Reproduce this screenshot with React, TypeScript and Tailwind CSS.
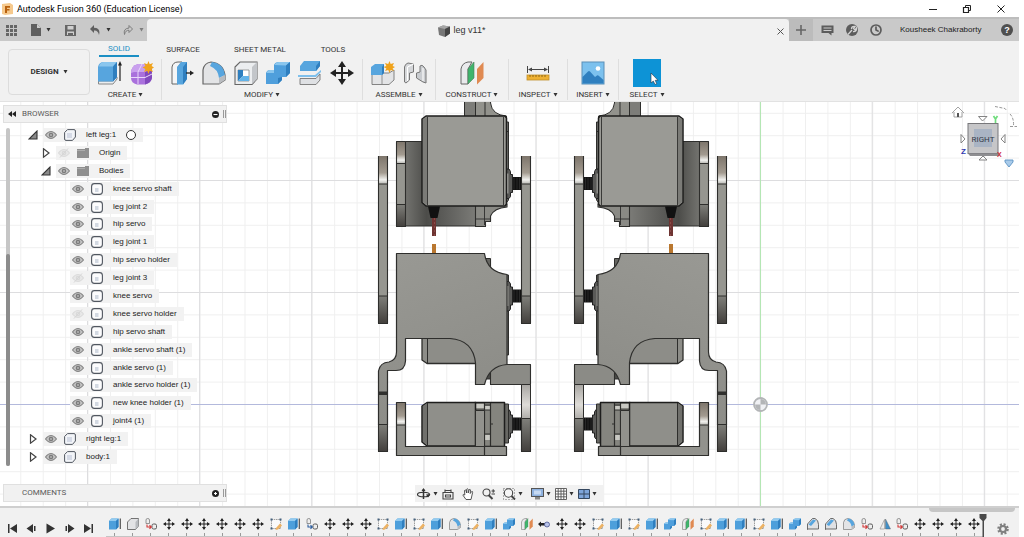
import React from "react";
import { Clock } from "lucide-react";

type IconProps = { className?: string };

/* ---------- Tool icons ---------- */

const Extrude = ({ className = "size-6" }: IconProps) => (
  <svg viewBox="0 0 24 24" className={className} aria-hidden="true">
    <path d="M0.500 20 H15 L19 16 V18 L15 23 H0.500 Z" fill="#eceef0" stroke="#888" strokeWidth="1" />
    <path d="M0 6 Q1 1 6 1 H19 V16 L15 20.500 H0 Z" fill="#57a5de" />
    <path d="M1 5.500 Q2 1 6 1 H19 L15 5.500 Z" fill="#8ac6ee" />
    <path d="M15 5.500 L19 1 V16 L15 20.500 Z" fill="#2f7fbf" />
    <path d="M22 3 V20" stroke="#222" strokeWidth="1.200" />
    <path d="M22 0 L24 4.500 H20 Z" fill="#222" />
  </svg>
);

const ExtrudeMini = ({ className = "size-3" }: IconProps) => (
  <svg viewBox="0 0 24 24" className={className} aria-hidden="true">
    <path d="M0 6 L5 1 H19 V18 L14 23 H0 Z" fill="#4d9fdb" />
    <path d="M0 6 L5 1 H19 L14 6 Z" fill="#93cbf0" />
    <path d="M14 6 L19 1 V18 L14 23 Z" fill="#2f7fbf" />
    <path d="M22.500 1 V22" stroke="#333" strokeWidth="2" />
  </svg>
);

const Form = ({ className = "size-6" }: IconProps) => (
  <svg viewBox="0 0 24 24" className={className} aria-hidden="true">
    <path d="M1 12 Q1 5 8 3 H16 Q20 4 22 8 V17 Q21 22 15 23.500 H7 Q1 22 1 17 Z" fill="#a970dc" />
    <path d="M1 12 Q1 5 8 3 H16 Q20 4 22 8 L15 11 H4 Z" fill="#c9a0ee" />
    <path d="M15 11 L22 8 V17 Q21 22 15 23.500 Z" fill="#8249bd" />
    <path d="M8 11 V23 M1 16.500 H15 L22 13 M12 3 L8 11" stroke="#e9d6fa" strokeWidth="1" fill="none" />
    <path d="M18.500 0 L19.700 3.300 L23 2 L21.600 5 L24 6.500 L21.600 8 L23 11 L19.700 9.800 L18.500 13 L17.200 9.800 L14 11 L15.400 8 L12.500 6.500 L15.400 5 L14 2 L17.200 3.300 Z" fill="#f0a31c" />
  </svg>
);

const PressPull = ({ className = "size-6" }: IconProps) => (
  <svg viewBox="0 0 24 24" className={className} aria-hidden="true">
    <path d="M2 6 Q3 1 8 1 H12 L8 6 V23 H2 Z" fill="#f4f5f6" stroke="#666" strokeWidth="1" />
    <path d="M7 6 L11 1 H17 V18 L13 23.500 H7 Z" fill="#57a5de" />
    <path d="M13 6 L17 1 V18 L13 23.500 Z" fill="#2f7fbf" />
    <path d="M16 12 H21" stroke="#222" strokeWidth="1.300" />
    <path d="M24 12 L20 9.600 V14.400 Z" fill="#222" />
  </svg>
);

const Fillet = ({ className = "size-6" }: IconProps) => (
  <svg viewBox="0 0 24 24" className={className} aria-hidden="true">
    <path d="M1 23 V9 Q2 2 9 1 Q21 2 23 14 V19 L17 23 Z" fill="#e3e4e6" stroke="#666" strokeWidth="1.200" />
    <path d="M10 1 Q21 2 23 14 L17 17 Q16 8 8 5 Z" fill="#57a5de" />
    <path d="M17 17 L23 14 V19 L17 23 Z" fill="#b9bcc0" />
  </svg>
);

const Chamfer = ({ className = "size-6" }: IconProps) => (
  <svg viewBox="0 0 24 24" className={className} aria-hidden="true">
    <path d="M1 23 V12 L11 1 H16 Q23 4 23 13 V22 H1 Z" fill="#dfe1e4" stroke="#555" strokeWidth="1.700" />
    <path d="M3 13 L12 3 L18 5 L8 16 Z" fill="#57a5de" />
  </svg>
);

const Shell = ({ className = "size-6" }: IconProps) => (
  <svg viewBox="0 0 24 24" className={className} aria-hidden="true">
    <path d="M1 6 L6 1 H23 V18 L18 23.500 H1 Z" fill="#eceef0" stroke="#666" strokeWidth="1.100" />
    <path d="M18 6 L23 1 V18 L18 23 Z" fill="#c3c6ca" />
    <path d="M4 9 H15 V20 H4 Z" fill="#fff" stroke="#888" strokeWidth="0.800" />
    <path d="M4 9 L9 9 V15 L4 20 Z" fill="#2f7fbf" />
    <path d="M9 15 H15 V20 H4 Z" fill="#63b3e8" />
  </svg>
);

const Combine = ({ className = "size-6" }: IconProps) => (
  <svg viewBox="0 0 24 24" className={className} aria-hidden="true">
    <path d="M0 12 Q1 9 4 9 H8 V4 Q9 1 13 1 H24 V12 L20 16 H16 V19 L12 23 H0 Z" fill="#4f9fdc" />
    <path d="M8.500 4 Q10 1 13 1 H24 L20 4.500 Z M0.500 12 Q1.500 9 4 9 H8 V12 Z" fill="#8ac6ee" />
    <path d="M20 4.500 L24 1 V12 L20 16 Z M12 17 L16 16 V19 L12 23 Z" fill="#2f7fbf" />
  </svg>
);

const OffsetFace = ({ className = "size-6" }: IconProps) => (
  <svg viewBox="0 0 24 24" className={className} aria-hidden="true">
    <path d="M2 5 L6 0 H22 V5 L18 10 H2 Z" fill="#57a5de" />
    <path d="M18 5 L22 0 V5 L18 10 Z" fill="#2f7fbf" />
    <path d="M0 14 H17 L23 9 V11 L18 16 H0 Z" fill="#7fc0ec" />
    <path d="M2 17.500 H18 L22 13 V19 L18 23.500 H2 Z" fill="#dfe1e4" stroke="#777" strokeWidth="0.900" />
  </svg>
);

const Move = ({ className = "size-6" }: IconProps) => (
  <svg viewBox="0 0 24 24" className={className} aria-hidden="true">
    <path d="M12 3 V21 M3 12 H21" stroke="#222" strokeWidth="2" />
    <path d="M12 0 L16 6 H8 Z M12 24 L16 18 H8 Z M0 12 L6 8 V16 Z M24 12 L18 8 V16 Z" fill="#222" />
  </svg>
);

const NewComponent = ({ className = "size-6" }: IconProps) => (
  <svg viewBox="0 0 24 24" className={className} aria-hidden="true">
    <path d="M1 12 H18 L23 9 V19 L18 23.500 H1 Z" fill="#e3e4e6" stroke="#777" strokeWidth="0.900" />
    <path d="M11 12 V23" stroke="#888" strokeWidth="0.900" />
    <path d="M0 6 L4 3 H13 V12 L11 14 H0 Z" fill="#57a5de" />
    <path d="M11 6 L13 3 V12 L11 14 Z" fill="#2f7fbf" />
    <path d="M18.500 0 L19.700 3 L23 2 L21.600 5 L24 6 L21.600 7.500 L23 10 L19.700 9 L18.500 12 L17.200 9 L14 10 L15.400 7.500 L12.500 6 L15.400 5 L14 2 L17.200 3 Z" fill="#f0a31c" />
  </svg>
);

const Joint = ({ className = "size-6" }: IconProps) => (
  <svg viewBox="0 0 24 24" className={className} aria-hidden="true">
    <path d="M1.500 6 Q2 3 5 2 L10.500 3 V11 L6.500 12 V19 L3 22 L1.500 21 Z" fill="#d4d6d9" stroke="#777" strokeWidth="1" />
    <path d="M4.500 6 L10.500 3 M4.500 6 V20" stroke="#fff" strokeWidth="1.200" fill="none" />
    <path d="M17 5 Q19 3 21 6 L23 9 V22 L20 21 L13.500 17 V12 L17 11 Z" fill="#c9ccd0" stroke="#777" strokeWidth="1" />
    <path d="M20 7 V20" stroke="#f6f6f6" strokeWidth="1.300" />
  </svg>
);

const Plane = ({ className = "size-6" }: IconProps) => (
  <svg viewBox="0 0 24 24" className={className} aria-hidden="true">
    <path d="M1 8 Q2 2 8 1 H12 L8 8 V23 H1 Z" fill="#e9eaec" stroke="#666" strokeWidth="1" />
    <path d="M8 8 L14 1 V17 L8 23 Z" fill="#3fb56c" stroke="#4a7a5a" strokeWidth="0.600" />
    <path d="M17 8 L23.500 1 V17 L17 23.500 Z" fill="#e08a52" />
  </svg>
);

const Measure = ({ className = "size-6" }: IconProps) => (
  <svg viewBox="0 0 24 24" className={className} aria-hidden="true">
    <path d="M1.500 5 V12 M22.500 5 V12 M3 8.500 H21" stroke="#444" strokeWidth="1" />
    <path d="M2 8.500 L6 6.500 V10.500 Z M22 8.500 L18 6.500 V10.500 Z" fill="#444" />
    <rect x="1" y="14" width="22" height="5" fill="#eeb133" stroke="#c08f2a" strokeWidth="0.800" />
    <path d="M4 14 V16 M7 14 V16 M10 14 V16 M13 14 V16 M16 14 V16 M19 14 V16" stroke="#7a5510" strokeWidth="0.800" />
  </svg>
);

const Picture = ({ className = "size-6" }: IconProps) => (
  <svg viewBox="0 0 24 24" className={className} aria-hidden="true">
    <rect x="1" y="1" width="22" height="22" fill="#7cc1ee" stroke="#5a8fb8" strokeWidth="1" />
    <circle cx="17" cy="7.500" r="2.300" fill="#fff" />
    <path d="M1.500 22.500 V16 L7 10.500 Q8 9.500 9 10.500 L14 16 L16 14.500 Q17 14 18 15 L22.500 19 V22.500 Z" fill="#2f7fbf" />
  </svg>
);

const SelectTool = ({ className = "size-7" }: IconProps) => (
  <svg viewBox="0 0 28 28" className={className} aria-hidden="true">
    <rect width="28" height="28" fill="#0d93d6" />
    <path d="M18 14 V24 L20.300 22 L22 25.500 L23.700 24.700 L22.200 21.300 H25 Z" fill="#fff" stroke="#234" strokeWidth="0.600" />
  </svg>
);

/* ---------- Timeline-only icons ---------- */

const Sketch = ({ className = "size-3" }: IconProps) => (
  <svg viewBox="0 0 24 24" className={className} aria-hidden="true">
    <path d="M3 3 H21 V21 H3 Z" fill="#fafafa" stroke="#777" strokeWidth="1.400" strokeDasharray="3 1.500" />
    <path d="M1 1 H5 V5 H1 Z M19 1 H23 V5 H19 Z M1 19 H5 V23 H1 Z" fill="#44617d" />
    <path d="M12 20 L20 11 L24 15 L16 23 L11 24 Z" fill="#edb263" />
  </svg>
);

const BaseBox = ({ className = "size-3" }: IconProps) => (
  <svg viewBox="0 0 24 24" className={className} aria-hidden="true">
    <path d="M1 8 L8 1 H23 V16 L17 23 H1 Z" fill="#e2e3e5" stroke="#555" strokeWidth="1.600" />
    <path d="M17 8 L23 1 V16 L17 23 Z" fill="#b8bbbf" />
  </svg>
);

const Link = ({ className, tone }: IconProps & { tone: string }) => (
  <svg viewBox="0 0 24 24" className={className} aria-hidden="true" fill="none">
    <path d="M2 11 V4 Q2 1 5.500 1 Q9 1 9 4 V11 Z" fill="#eee" stroke="#777" strokeWidth="1.500" />
    <rect x="14" y="12" width="9" height="10" rx="3" fill="#eee" stroke="#555" strokeWidth="1.900" />
    <path d="M4 13 V18 H12 M9 14.500 L12.500 18 L9 21.500" stroke={tone} strokeWidth="2.200" />
  </svg>
);
const LinkRed = (p: IconProps) => <Link {...p} tone="#d33b3b" />;
const LinkBlue = (p: IconProps) => <Link {...p} tone="#2f5f9f" />;

const Rigid = ({ className = "size-3" }: IconProps) => (
  <svg viewBox="0 0 24 24" className={className} aria-hidden="true">
    <path d="M0 12 L6 7 V10 H14 V15 H6 V18 Z" fill="#222" />
    <circle cx="18" cy="13" r="5" fill="#b8c3ea" stroke="#4a5690" strokeWidth="1.600" />
  </svg>
);

const Mirror = ({ className = "size-3" }: IconProps) => (
  <svg viewBox="0 0 24 24" className={className} aria-hidden="true">
    <path d="M11 3 V22 H2 Z" fill="#eee" stroke="#888" strokeWidth="1.200" />
    <path d="M13 2 L23 22 H13 Z" fill="#3f8fc9" stroke="#555" strokeWidth="0.800" />
  </svg>
);

/* ---------- Browser icons ---------- */

const Eye = ({ off }: { off?: boolean }) => (
  <svg viewBox="0 0 12 10" className={off ? "h-2.5 w-3 opacity-20" : "h-2.5 w-3"} aria-hidden="true">
    <path d="M0.500 5 Q6 -2 11.500 5 Q6 12 0.500 5 Z" fill="#c4c4c4" stroke="#858585" strokeWidth="1.100" />
    <circle cx="6" cy="5" r="2.300" fill="#7b7b7b" />
    <circle cx="6" cy="5" r="0.800" fill="#ddd" />
    {off && <path d="M2 9.500 L10 0.500" stroke="#666" strokeWidth="1" />}
  </svg>
);

const Folder = () => (
  <svg viewBox="0 0 12 10" className="h-2.5 w-3" aria-hidden="true">
    <path d="M0 1 H8 V0 H12 V10 H0 Z" fill="#8f8f8f" />
    <path d="M0 2.500 H8" stroke="#bdbdbd" strokeWidth="0.600" />
  </svg>
);

const BodyIcon = () => (
  <svg viewBox="0 0 12 12" className="size-3" aria-hidden="true">
    <rect x="0.600" y="0.600" width="10.800" height="10.800" rx="2.800" fill="#fcfcfd" stroke="#515760" strokeWidth="1.100" />
    <path d="M4 5 H7.500 V9 H4 Z" fill="#d3d9e2" />
  </svg>
);

const ComponentIcon = () => (
  <svg viewBox="0 0 12 12" className="size-3" aria-hidden="true">
    <path d="M0.600 3.500 L3.500 0.600 H10 Q11.400 0.600 11.400 2 V8 L8.500 11.400 H2 Q0.600 11.400 0.600 10 Z" fill="#f2f4f8" stroke="#515760" strokeWidth="1" />
    <path d="M3 4 H8 V9 H3 Z" fill="#d5dae6" />
  </svg>
);

const Arrow = ({ open }: { open: boolean }) => (
  <svg viewBox="0 0 10 10" className="size-2.5" aria-hidden="true">
    {open ? (
      <path d="M9 1 V9 H1 Z" fill="#8a8a8a" stroke="#333" strokeWidth="1.100" />
    ) : (
      <path d="M2.500 0.800 L8 5 L2.500 9.200 Z" fill="#fff" stroke="#444" strokeWidth="1.200" />
    )}
  </svg>
);

const Caret = () => (
  <svg viewBox="0 0 5 4" className="h-1 w-[5px] shrink-0" aria-hidden="true">
    <path d="M0.500 0 H4.500 L2.500 3.500 Z" fill="#333" />
  </svg>
);

/* ---------- 3D model ---------- */

const OUT = "#2e2e2c";

const Shaft = ({ y }: { y: number }) => (
  <g transform={`translate(0 ${y})`}>
    <rect x="510" y="-6.500" width="11" height="13" fill="#111" />
    <path d="M514 -6 V6 M517 -6 V6 M519.500 -6 V6" stroke="#3a3a3a" strokeWidth="0.600" />
    <path d="M505 -14.500 H509 L510.500 -12 V-9 H512.500 V9 H510.500 V13 L509 15 H505 Z" fill="#5a5a58" stroke="#222" strokeWidth="1" />
    <path d="M507.500 -10 V10" stroke="#b4b4b0" strokeWidth="1.600" />
  </g>
);

const SidePlate = ({ x }: { x: number }) => (
  <g>
    <rect x={x} y="156" width="9" height="28" fill="url(#bendTop)" />
    <rect x={x} y="184" width="9" height="112" fill="#969690" />
    <rect x={x} y="296" width="9" height="27.500" fill="url(#bendLow)" />
    <path d={`M${x} 156 V323.500 H${x + 9} V156 M${x} 184 h9 M${x} 296 h9`} fill="none" stroke={OUT} strokeWidth="1.100" />
  </g>
);

const Leg = () => (
  <g strokeLinejoin="round">
    <path d="M464.500 98 H475.500 V118 H464.500 Z" fill="#7d7d79" stroke={OUT} />
    <path d="M475.500 98 H490.500 V103 Q492 115 506.500 116 V120 H475.500 Z" fill="#92928c" stroke={OUT} />
    <path d="M485 98 V118" stroke={OUT} />

    <rect x="405.500" y="141.500" width="70" height="84.500" fill="url(#shade)" stroke={OUT} />
    <rect x="396.500" y="141.500" width="9" height="85" fill="#969690" />
    <rect x="396.500" y="141.500" width="9" height="22" fill="url(#bendTop)" />
    <rect x="396.500" y="204.500" width="9" height="22" fill="url(#bendLow)" />
    <path d="M396.500 141.500 H405.500 V226.500 H396.500 Z M396.500 163.500 H405.500 M396.500 204.500 H405.500" fill="none" stroke={OUT} strokeWidth="1.100" />

    <path d="M475.500 204 H507 V207 Q494 208 490.500 216 V221.500 H485.500 V226.500 H475.500 Z" fill="#8a8a85" stroke={OUT} strokeWidth="1.100" />
    <path d="M484.500 206 V225 M475.500 219 H490" stroke={OUT} strokeWidth="0.900" />

    <path d="M504 122 H508.500 V200 L504 206 Z" fill="#7b7b77" stroke={OUT} />
    <path d="M504 131.500 H509" stroke={OUT} />
    <Shaft y={183.500} />
    <path d="M426 116 H505 L506.500 118 V204 L505 206 H426 L422 202.500 V119 Z" fill="#9a9a95" stroke="#1e1e1d" strokeWidth="1.500" />
    <path d="M427.500 117 V205 M503.500 117 V205" stroke={OUT} strokeWidth="0.900" />
    <path d="M423 119 L427 117 V205 L423 202 Z" fill="#7b7b77" />

    <path d="M428 206.500 H440 L437.500 218 H430.500 Z" fill="#111" />
    <rect x="432" y="218" width="4" height="18" fill="#6e3432" />
    <path d="M434.500 218 V236" stroke="#8a4a48" strokeWidth="1" strokeDasharray="2 2" />
    <rect x="432" y="244" width="4" height="9" fill="#b9772f" />

    <SidePlate x={378.5} />
    <SidePlate x={521.5} />

    <path d="M485 258.500 H490.500 V272 L485 266 Z" fill="#666662" stroke={OUT} />
    <path d="M505.500 275 H508.500 V355 H505.500 Z" fill="#6d6d69" stroke={OUT} />
    <Shaft y={296} />
    <path d="M422 338 H476 V363.500 H427 L422 360 Z" fill="#8d8d88" stroke={OUT} strokeWidth="1.300" />
    <path d="M427.500 338 V363" stroke={OUT} />
    <path d="M484 370 H490.500 V379 H484 Z" fill="#4b4b48" stroke={OUT} />
    <path d="M490.500 364.500 H530.500 V384.500 H490.500 Z" fill="#8b8b86" stroke={OUT} strokeWidth="1.100" />
    <path d="M396.500 253.500 H484.500 Q487 272 507 274.500 V364.500 Q489 366 484.500 384.500 H475.500 V363 Q473 340 450 338.500 H405.500 V361 Q405 370.500 396 370.500 H387.500 V425 H378.500 V371 Q380 362.500 389 362 Q396.500 360 396.500 352 Z" fill="url(#body)" stroke={OUT} strokeWidth="1.200" />
    <rect x="378.500" y="391.500" width="9" height="3.500" fill="#30302e" />
    <path d="M378.500 424.500 H387.500 V451.500 H378.500 Z" fill="url(#bendLow)" stroke={OUT} strokeWidth="1.100" />

    <path d="M521.500 384.500 H530.500 V418.500 H521.500 Z" fill="url(#foot)" stroke={OUT} />
    <path d="M521.500 418.500 H530.500 V451.500 H521.500 Z" fill="url(#bendLow)" stroke={OUT} strokeWidth="1.100" />

    <Shaft y={424} />
    <path d="M504 404 H508.500 V443 H504 Z" fill="#686864" stroke={OUT} />
    <path d="M475 402.500 H504.500 V446.500 H475 Z" fill="#85857f" stroke="#1e1e1d" strokeWidth="1.500" />
    <path d="M476 404 H484 V408 H476 Z M485 406 H490 V410 H485 Z M485 435 H490 V440 H485 Z" fill="#c9c9c3" />
    <path d="M484.500 403 V446 M490.500 403 V446 M476 410 H490 M484.500 434 H490 M490.500 424 H493 M484.500 405 H490" stroke={OUT} strokeWidth="1.200" />
    <path d="M427 402.500 H475.500 V446 H427 L422 442 V406 Z" fill="#8f8f8a" stroke="#1e1e1d" strokeWidth="1.500" />
    <path d="M427.500 403 V446" stroke={OUT} />
    <path d="M423 406 L427 403.500 V445 L423 441.500 Z" fill="#70706c" />
    <path d="M475.500 410.500 H484.500 V447 H475.500 Z" fill="#92928d" stroke={OUT} />

    <rect x="396.500" y="402.500" width="9" height="22.500" fill="url(#bendTop)" />
    <path d="M396.500 425 H405.500 V446.500 H506.500 V455.500 H396.500 Z" fill="#92928d" />
    <path d="M396.500 402.500 H405.500 V446.500 H506.500 V455.500 H396.500 Z M396.500 425 H405.500 M484.500 446.500 V455" fill="none" stroke={OUT} strokeWidth="1.200" />
  </g>
);

const Scene = () => (
  <svg className="absolute inset-0 h-full w-full" role="img" aria-label="Robot legs, right view">
    <defs>
      <pattern id="minor" x="20.300" y="10.800" width="22.420" height="22.400" patternUnits="userSpaceOnUse">
        <path d="M0.500 0 V22.400 M0 0.500 H22.420" stroke="#efefef" fill="none" />
      </pattern>
      <pattern id="major" x="87" y="78" width="112.100" height="112" patternUnits="userSpaceOnUse">
        <path d="M0.500 0 V112 M0 0.500 H112.100" stroke="#dddddf" fill="none" />
      </pattern>
      <linearGradient id="bendTop" x2="0" y2="1">
        <stop offset="0" stopColor="#7d756b" />
        <stop offset="0.600" stopColor="#a39b90" />
        <stop offset="0.850" stopColor="#f1f1ee" />
        <stop offset="1" stopColor="#b5b5b0" />
      </linearGradient>
      <linearGradient id="bendLow" x2="0" y2="1">
        <stop offset="0" stopColor="#7f7f7a" />
        <stop offset="1" stopColor="#423f3c" />
      </linearGradient>
      <linearGradient id="shade" x2="1" y2="0">
        <stop offset="0" stopColor="#73736f" />
        <stop offset="0.300" stopColor="#4c4c49" />
        <stop offset="0.550" stopColor="#5c5c59" />
        <stop offset="1" stopColor="#7b7b77" />
      </linearGradient>
      <linearGradient id="body" x2="0.300" y2="1">
        <stop offset="0" stopColor="#999994" />
        <stop offset="1" stopColor="#8c8c87" />
      </linearGradient>
      <linearGradient id="foot" x2="0" y2="1">
        <stop offset="0" stopColor="#a8a6a2" />
        <stop offset="0.600" stopColor="#dedcd8" />
        <stop offset="1" stopColor="#b0aeaa" />
      </linearGradient>
    </defs>
    <rect width="100%" height="100%" fill="#fff" />
    <rect width="100%" height="100%" fill="url(#minor)" />
    <rect width="100%" height="100%" fill="url(#major)" />
    <rect y="302" width="100%" height="1" fill="#b3b9dc" />
    <rect x="760" width="1" height="100%" fill="#b4e6b4" />
    <g transform="translate(0 -102)">
      <Leg />
      <g transform="translate(1105 0) scale(-1 1)">
        <Leg />
      </g>
      <circle cx="760.500" cy="404.500" r="6.500" fill="#f0f1f4" stroke="#b3b5b7" strokeWidth="1.800" />
      <path d="M760.500 404.500 V399 A5.500 5.500 0 0 1 766 404.500 Z M760.500 404.500 V410 A5.500 5.500 0 0 1 755 404.500 Z" fill="#b3b5b7" />
    </g>
  </svg>
);

const ViewCube = () => (
  <svg viewBox="0 0 72 66" className="absolute top-0 right-0 h-[66px] w-[72px]" role="img" aria-label="View cube: right">
    <path d="M5 11 L11 5 L17 11 M7 10 V15 H15 V10" fill="#fff" stroke="#999" strokeWidth="0.900" />
    <rect x="10" y="11" width="2" height="4" fill="#555" />
    <path d="M31.500 14.500 H40 L35.500 19 Z M32 58 H40 L36 54 Z M14 32.500 V41 L18 37 Z M58 32.500 V41 L54 37 Z" fill="#fff" stroke="#777" strokeWidth="0.900" />
    <path d="M48 4.500 L58 6.500 L60 9 M63 12 Q67 16 66.500 24 M63 24.500 H70" fill="none" stroke="#999" strokeWidth="1" strokeDasharray="3 1.500" />
    <path d="M46.500 14 L48.500 17 L50.500 14 M48.500 17 V21" stroke="#6fdc7c" strokeWidth="1.700" fill="none" />
    <rect x="21" y="21.500" width="30" height="30" fill="#c6c6c8" stroke="#77777a" />
    <path d="M21 51.500 H51 L53 54 H23 Z" fill="#8e8e91" />
    <rect x="27" y="27" width="18" height="18" fill="#a9b4c4" />
    <text x="36" y="39.500" textAnchor="middle" className="fill-[#333a48] font-['Roboto'] text-[8px]">RIGHT</text>
    <text x="14" y="52" className="fill-[#3038b0] font-['Liberation_Sans'] text-[8px] font-bold">Z</text>
    <text x="50" y="55" className="fill-[#d02a3a] font-['Liberation_Sans'] text-[7px] font-bold">X</text>
    <path d="M58 58 H66 V60 L62 65 L58 60 Z" fill="#a9cbea" stroke="#5c93c4" strokeWidth="0.900" />
  </svg>
);

/* ---------- Data ---------- */

type Node = { name: string; depth: 0 | 1 | 2; open?: boolean; kind: "component" | "folder" | "body"; off?: boolean; radio?: boolean };

const body = (name: string, off = false): Node => ({ name, depth: 2, kind: "body", off });

const tree: Node[] = [
  { name: "left leg:1", depth: 0, open: true, kind: "component", radio: true },
  { name: "Origin", depth: 1, open: false, kind: "folder", off: true },
  { name: "Bodies", depth: 1, open: true, kind: "folder" },
  body("knee servo shaft"),
  body("leg joint 2"),
  body("hip servo"),
  body("leg joint 1"),
  body("hip servo holder"),
  body("leg joint 3", true),
  body("knee servo"),
  body("knee servo holder", true),
  body("hip servo shaft"),
  body("ankle servo shaft (1)"),
  body("ankle servo (1)"),
  body("ankle servo holder (1)"),
  body("new knee holder (1)"),
  body("joint4 (1)"),
  { name: "right leg:1", depth: 0, open: false, kind: "component" },
  { name: "body:1", depth: 0, open: false, kind: "component" },
];

const indent = ["pl-0", "pl-[13px]", "pl-[27px]"];

const groups = [
  { label: "CREATE", width: "w-[72px]", icons: [Extrude, Form] },
  { label: "MODIFY", width: "w-[201px]", icons: [PressPull, Fillet, Shell, Combine, OffsetFace, Move] },
  { label: "ASSEMBLE", width: "w-[73px]", icons: [NewComponent, Joint] },
  { label: "CONSTRUCT", width: "w-[73px]", icons: [Plane] },
  { label: "INSPECT", width: "w-[59px]", icons: [Measure] },
  { label: "INSERT", width: "w-[51px]", icons: [Picture] },
  { label: "SELECT", width: "w-14", icons: [SelectTool] },
];

const ops: Record<string, [string, React.ComponentType<IconProps>]> = {
  e: ["Extrude", ExtrudeMini],
  b: ["Base feature", BaseBox],
  r: ["Joint", LinkRed],
  l: ["As-built joint", LinkBlue],
  m: ["Move", Move],
  s: ["Sketch", Sketch],
  f: ["Fillet", Fillet],
  c: ["Combine", Combine],
  p: ["Plane", Plane],
  g: ["Rigid group", Rigid],
  h: ["Chamfer", Chamfer],
  i: ["Mirror", Mirror],
};

const history = "ebrmmmmmmselmmmsesefsecpgmmsesecpseesechhfrirmmmm".split("");

/* ---------- Panels ---------- */

const TitleBar = () => (
  <header className="flex h-[17px] items-center bg-white pr-[18px] pl-0.5">
    <svg viewBox="0 0 11 12" className="h-3 w-[11px]" aria-hidden="true">
      <path d="M0 1 L8 0 L11 2 V11 L3 12 L0 11 Z" fill="#f6c98d" />
      <path d="M3 3 H8 V4.800 H5 V6 H7.500 V7.600 H5 V10 H3 Z" fill="#b8610f" />
    </svg>
    <h1 className="ml-1 flex-1 font-['Roboto',sans-serif] text-[9px] leading-4 whitespace-nowrap text-black">
      Autodesk Fusion 360 (Education License)
    </h1>
    <div className="flex items-center gap-6">
      <button aria-label="Minimize">
        <svg viewBox="0 0 10 10" className="size-2.5"><path d="M1 5.500 H9" stroke="#222" /></svg>
      </button>
      <button aria-label="Restore">
        <svg viewBox="0 0 10 10" className="size-2.5" fill="none" stroke="#222">
          <path d="M1.500 3.500 H6.500 V8.500 H1.500 Z" strokeWidth="1.200" /><path d="M3.500 3 V1.500 H8.500 V6.500 H7" />
        </svg>
      </button>
      <button aria-label="Close">
        <svg viewBox="0 0 10 10" className="size-2.5"><path d="M1.500 1.500 L8.500 8.500 M8.500 1.500 L1.500 8.500" stroke="#222" /></svg>
      </button>
    </div>
  </header>
);

const TabBar = () => (
  <div className="flex h-6 border-t-2 border-[#bdbdbd] bg-[#c9c9c9]">
    <nav aria-label="File" className="flex w-[147px] items-center pl-1.5">
      <button aria-label="Data panel" className="mr-3.5">
        <svg viewBox="0 0 11 11" className="size-[11px]" fill="#666">
          <path d="M0 0h3v3H0zM4 0h3v3H4zM8 0h3v3H8zM0 4h3v3H0zM4 4h3v3H4zM8 4h3v3H8zM0 8h3v3H0zM4 8h3v3H4zM8 8h3v3H8z" />
        </svg>
      </button>
      <button aria-label="File" className="mr-3.5 flex items-center gap-1">
        <svg viewBox="0 0 11 12" className="h-3 w-[11px]">
          <path d="M0 0 H6 L10 4 V12 H0 Z" fill="#5f5f5f" /><path d="M6 0 V4 H10" fill="#ccc" />
        </svg>
        <Caret />
      </button>
      <button aria-label="Save" className="mr-3.5">
        <svg viewBox="0 0 11 11" className="size-[11px]">
          <path d="M0 0 H11 V11 H0 Z" fill="#666" /><path d="M2.500 1 H8.500 V4.500 H2.500 Z M2 6.500 H9 V10 H2 Z" fill="#cfcfcf" /><path d="M3 8 H8 V10 H3 Z" fill="#666" />
        </svg>
      </button>
      <button aria-label="Undo" className="mr-3 flex items-center gap-1.5">
        <svg viewBox="0 0 10 10" className="size-2.5">
          <path d="M4 0 L0 4 L4 8 V5.500 Q8 5 9 10 Q11 3 4 2.700 Z" fill="#5f5f5f" />
        </svg>
        <Caret />
      </button>
      <button aria-label="Redo" className="flex items-center gap-1.5 opacity-50">
        <svg viewBox="0 0 10 10" className="size-2.5">
          <path d="M6 0.500 L9.500 4 L6 7.500 V5.300 Q2.500 5 1.500 9.500 Q0 3.500 6 3 Z" fill="none" stroke="#333" strokeWidth="1" />
        </svg>
        <Caret />
      </button>
    </nav>
    <div className="flex flex-1 items-center rounded-t-sm bg-[#f1f1f1] pt-0.5 pr-1">
      <span className="flex flex-1 items-center justify-center gap-1 text-[9px] text-[#333]">
        <svg viewBox="0 0 12 12" className="size-3" aria-hidden="true">
          <path d="M0 2.500 L5 0.500 L12 1.500 V8.500 L7 12 L1 10 Z" fill="#777" />
          <path d="M0 2.500 L5 0.500 L12 1.500 L7 4 Z" fill="#a5a5a5" />
          <path d="M7 4 L12 1.500 V8.500 L7 12 Z" fill="#444" />
        </svg>
        leg v11*
      </span>
      <button aria-label="Close tab">
        <svg viewBox="0 0 9 9" className="size-[9px]"><path d="M1.500 1.500 L7.500 7.500 M7.500 1.500 L1.500 7.500" stroke="#555" /></svg>
      </button>
    </div>
    <div className="flex items-center text-[#5c5c5c]">
      <button aria-label="New tab" className="flex h-full w-6 items-center justify-center bg-[#bcbcbc]">
        <svg viewBox="0 0 10 10" className="size-2.5"><path d="M5 0 V10 M0 5 H10" stroke="#666" strokeWidth="1.600" /></svg>
      </button>
      <button aria-label="Comments" className="ml-2">
        <svg viewBox="0 0 13 11" className="h-[11px] w-[13px]">
          <path d="M0.500 0.500 H12.500 V8 H10.500 V10.500 L7.500 8 H0.500 Z" fill="#5c5c5c" /><path d="M2.500 3 H10.500 M2.500 5.500 H10.500" stroke="#ccc" />
        </svg>
      </button>
      <button aria-label="Job status" className="ml-3">
        <svg viewBox="0 0 12 12" className="size-3">
          <circle cx="6" cy="6" r="6" fill="#5c5c5c" /><path d="M2 10.500 L6 6 M5.500 5 Q5.500 2 9 2.500 L7.500 4.500 L9 6 L10.500 4 Q11 8 7 7.500" stroke="#d4d4d4" strokeWidth="1.300" fill="none" />
        </svg>
      </button>
      <button aria-label="Recent" className="ml-3"><Clock className="size-3" strokeWidth={3.4} /></button>
      <button className="ml-[18px] w-[85px] text-left text-[8px] whitespace-nowrap text-[#222]">Kousheek Chakraborty</button>
      <button aria-label="Help" className="mr-1.5 ml-4 flex size-3 items-center justify-center rounded-full bg-[#4f4f4f] text-[9px] leading-3 font-bold text-white">
        ?
      </button>
    </div>
  </div>
);

const Ribbon = () => (
  <div className="flex h-[61px] border-b border-[#e2e2e2] bg-[#f1f1f1] font-['Roboto',sans-serif] text-[8px] leading-[10px] text-[#333]">
    <button className="mt-2 ml-2 flex h-[46px] w-[82px] items-center justify-center gap-1 rounded-sm border border-[#dcdcdc] font-bold">
      DESIGN <Caret />
    </button>
    <div className="flex flex-col">
      <div role="tablist" className="ml-[9px] flex h-4 items-end">
        <button role="tab" aria-selected="true" className="w-10 border-b-2 border-[#1b8fc4] pb-px text-[#1b8fc4]">SOLID</button>
        <button role="tab" className="ml-6 w-10 pb-0.5">SURFACE</button>
        <button role="tab" className="ml-5 w-[74px] pb-0.5">SHEET METAL</button>
        <button role="tab" className="ml-4 w-10 pb-0.5">TOOLS</button>
      </div>
      <div className="flex h-[43px]">
        {groups.map((g, i) => (
          <section key={g.label} className={`${g.width} ${i < groups.length - 1 ? "border-r" : ""} mt-0.5 flex flex-col items-center border-[#dedede]`}>
            <div className="flex h-[28px] items-center gap-2">
              {g.icons.map((Icon, k) => (
                <button key={k} aria-label={`${g.label} tool ${k + 1}`}><Icon /></button>
              ))}
            </div>
            <button className="mt-[3px] flex items-center gap-0.5">{g.label} <Caret /></button>
          </section>
        ))}
      </div>
    </div>
  </div>
);

const PanelHead = ({ label, open }: { label: string; open: boolean }) => (
  <div className="flex h-[18px] w-[224px] items-center border border-[#e0e0e0] bg-[#f1f1f1] pl-1">
    <span className="w-3.5">
      {open && (
        <svg viewBox="0 0 8 6" className="h-1.5 w-2" aria-hidden="true"><path d="M4 0 V6 L0 3 Z M8 0 V6 L4 3 Z" fill="#222" /></svg>
      )}
    </span>
    <h2 className="flex-1 font-['Roboto',sans-serif] text-[8px] text-[#5a5a5a]">{label}</h2>
    <button aria-label={`${open ? "Collapse" : "Expand"} ${label}`} className="mr-1">
      <svg viewBox="0 0 7 7" className="size-[7px]">
        <circle cx="3.500" cy="3.500" r="3.500" fill="#222" />
        <path d={open ? "M1.500 3.500 H5.500" : "M2 3.500 H5 M3.500 2 V5"} stroke="#fff" strokeWidth="1.100" />
      </svg>
    </button>
    <span className="h-2 w-[3px] border-x border-[#999]" />
  </div>
);

const Browser = () => (
  <aside>
    <PanelHead label="BROWSER" open />
    <div className="mt-[3px] flex h-[340px] pl-[3px]">
      <div className="mt-0.5 flex w-1 flex-col rounded-sm bg-[#c6c6c6]">
        <div className="mt-auto h-[212px] rounded-sm bg-[#8c8c8c]" />
      </div>
      <ul className="grid auto-rows-fr pl-[18px]">
        {tree.map((n) => (
          <li key={n.name} className={`${indent[n.depth]} flex items-center`}>
            <span className="flex w-[15px] items-center">
              {n.open !== undefined && (
                <button aria-label={`${n.open ? "Collapse" : "Expand"} ${n.name}`}><Arrow open={n.open} /></button>
              )}
            </span>
            <div className="flex h-3.5 items-center bg-[#f2f2f2] pr-[7px] pl-0.5">
              <button aria-label={`Toggle ${n.name}`}><Eye off={n.off} /></button>
              <span className="mr-2.5 ml-[7px]">
                {n.kind === "body" ? <BodyIcon /> : n.kind === "folder" ? <Folder /> : <ComponentIcon />}
              </span>
              <span className="text-[8px] leading-3.5 whitespace-nowrap text-[#222]">{n.name}</span>
              {n.radio && (
                <input type="radio" aria-label={`Activate ${n.name}`} className="ml-2.5 size-2.5 appearance-none rounded-full border border-[#333] bg-white" />
              )}
            </div>
          </li>
        ))}
      </ul>
    </div>
  </aside>
);

const navButton = "flex items-center gap-0.5";

const NavBar = () => (
  <div role="toolbar" aria-label="Navigation" className="absolute bottom-1 left-[415px] flex h-[17px] w-[189px] items-center gap-2 bg-[#f1f1f1] pl-0.5 text-[#444]">
    <button aria-label="Orbit" className={navButton}>
      <svg viewBox="0 0 14 14" className="size-3.5" fill="none" stroke="#333" strokeWidth="1.100">
        <ellipse cx="6.500" cy="7.500" rx="6" ry="2.300" /><path d="M6.500 2 V12" strokeWidth="1.500" /><path d="M9 7.500 L13.500 7 L11 10.500 Z M6.500 1 L8.500 4 H4.500 Z" fill="#333" stroke="none" />
      </svg>
      <Caret />
    </button>
    <button aria-label="Look at" className="-ml-1">
      <svg viewBox="0 0 12 12" className="size-3" fill="none" stroke="#444" strokeWidth="1.100"><path d="M1 4.500 H11 V11 H1 Z M3 4 V1.500 M9 4 V1.500 M3 2.500 H9 M3.500 7 H8.500 V9 H3.500 Z" /></svg>
    </button>
    <button aria-label="Pan">
      <svg viewBox="0 0 12 12" className="size-3" fill="#fff" stroke="#444" strokeWidth="0.900"><path d="M4 11.500 L0.800 7 Q1 5.800 2.800 7 L2.500 2.500 Q3.300 1.500 4 2.500 L4.600 5 V1.300 Q5.500 0.200 6.200 1.300 V5 L7.300 1.500 Q8.300 1 8.500 2 L8.200 5.500 L9.700 3.500 Q10.800 3.200 10.600 4.500 L9 11.500 Z" /></svg>
    </button>
    <button aria-label="Zoom">
      <svg viewBox="0 0 13 12" className="h-3 w-[13px]" fill="none" stroke="#444" strokeWidth="1.100"><circle cx="4.500" cy="4.500" r="3.500" /><path d="M6.500 7 L10.500 11" strokeWidth="2" /><path d="M9.500 3 H13 M11.200 1.300 V4.700 M9.500 6 H13" /></svg>
    </button>
    <button aria-label="Fit" className={navButton}>
      <svg viewBox="0 0 13 12" className="h-3 w-[13px]" fill="none" stroke="#444" strokeWidth="1.100"><path d="M0.500 0.500 H11.500 V11.500 H0.500 Z" strokeDasharray="1 2" strokeWidth="0.800" /><circle cx="5.500" cy="5" r="4.200" fill="#f6f6f6" /><path d="M8.500 8 L12 11.500" strokeWidth="2" /></svg>
      <Caret />
    </button>
    <button aria-label="Display" className={navButton}>
      <svg viewBox="0 0 13 12" className="h-3 w-[13px]"><rect x="0.500" y="0.500" width="12" height="8" fill="#8fb2e0" stroke="#555" /><rect x="3" y="2.500" width="7" height="4" fill="#c6d9f2" /><path d="M4 9 H9 V11.500 H4 Z" fill="#888" /></svg>
      <Caret />
    </button>
    <button aria-label="Grid" className={`${navButton} -ml-1`}>
      <svg viewBox="0 0 12 12" className="size-3" fill="#fff" stroke="#555" strokeWidth="0.900"><path d="M0.500 0.500 H11.500 V11.500 H0.500 Z M0.500 3.200 H11.500 M0.500 6 H11.500 M0.500 8.800 H11.500 M3.200 0.500 V11.500 M6 0.500 V11.500 M8.800 0.500 V11.500" /></svg>
      <Caret />
    </button>
    <button aria-label="Viewports" className={`${navButton} -ml-1`}>
      <svg viewBox="0 0 12 10" className="h-2.5 w-3" fill="#7ea5da" stroke="#34475f" strokeWidth="1"><path d="M0.500 0.500 H11.500 V9.500 H0.500 Z M6 0.500 V9.500 M0.500 5 H11.500" /></svg>
      <Caret />
    </button>
  </div>
);

const playback = [
  ["Go to start", "M1 1 V10 H2.500 V1 Z M10 1 V10 L3 5.500 Z"],
  ["Step back", "M7 1 V10 L0.500 5.500 Z M8 3 H9.500 V8 H8 Z"],
  ["Play", "M1.500 0.500 V10.500 L10 5.500 Z"],
  ["Step forward", "M4 1 V10 L10.500 5.500 Z M1.500 3 H3 V8 H1.500 Z"],
  ["Go to end", "M1 1 V10 L8 5.500 Z M8.500 1 V10 H10 V1 Z"],
];

const Timeline = () => (
  <footer className="flex h-[31px] border-t-2 border-[#cfcfcf] bg-[#f1f1f1]">
    <div className="flex items-center gap-2 pt-3 pr-3 pl-[7px]">
      {playback.map(([label, d]) => (
        <button key={label} aria-label={label}>
          <svg viewBox="0 0 11 11" className="size-[11px]"><path d={d} fill="#333" /></svg>
        </button>
      ))}
    </div>
    <ol className="grid flex-1 auto-cols-fr grid-flow-col border-b border-[#c4c4c4] pt-2.5">
      {history.map((k, i) => {
        const [label, Icon] = ops[k];
        return (
          <li key={i} className="flex flex-col items-center justify-between">
            <button aria-label={`${label} ${i + 1}`}><Icon className="size-3" /></button>
            <span className="h-[3px] w-px bg-[#9a9a9a]" />
          </li>
        );
      })}
    </ol>
    <div className="relative flex w-9 items-end justify-end pr-2.5 pb-0.5">
      <span className="absolute top-0 right-1 h-1 w-[86px] rounded-b-sm bg-[#c6c6c6]" />
      <svg viewBox="0 0 8 24" className="absolute bottom-0 -left-1 h-6 w-2" aria-hidden="true">
        <path d="M0.500 1 H7.500 V5 L5 8 V24 H3.500 V8 L0.500 5 Z" fill="#4a4a4a" />
      </svg>
      <button aria-label="Timeline settings">
        <svg viewBox="0 0 12 12" className="size-3">
          <circle cx="6" cy="6" r="4.600" fill="none" stroke="#808080" strokeWidth="2.400" strokeDasharray="2 1.610" />
          <circle cx="6" cy="6" r="3" fill="none" stroke="#808080" strokeWidth="2.200" />
        </svg>
      </button>
    </div>
  </footer>
);

export default function App() {
  return (
    <div className="flex min-h-screen flex-col bg-white font-['Liberation_Sans',Arial,sans-serif]">
      <TitleBar />
      <div className="mr-[5px] flex flex-1 flex-col">
        <TabBar />
        <Ribbon />
        <main className="relative flex-1 overflow-hidden">
          <Scene />
          <div className="relative flex h-full flex-col items-start justify-between gap-[18px] pt-[3px] pb-[3px] pl-[3px]">
            <Browser />
            <PanelHead label="COMMENTS" open={false} />
          </div>
          <NavBar />
          <ViewCube />
        </main>
        <Timeline />
      </div>
    </div>
  );
}
